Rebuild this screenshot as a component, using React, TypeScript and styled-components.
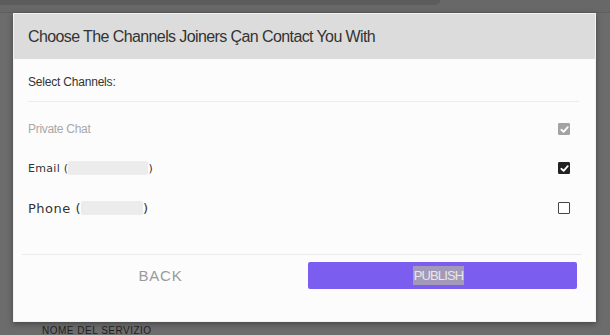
import styled, { createGlobalStyle } from 'styled-components';

const GlobalStyle = createGlobalStyle`
  html, body {
    margin: 0;
    padding: 0;
    background: #6c6c6c;
  }
`;

type Channel = {
    label: string;
    blurWidth?: number;
    state: 'locked' | 'on' | 'off';
    size: number;
    spacing: number;
};

const channels: Channel[] = [
    { label: 'Private Chat', state: 'locked', size: 12, spacing: -0.3 },
    { label: 'Email', blurWidth: 80, state: 'on', size: 11, spacing: 0.3 },
    { label: 'Phone', blurWidth: 62, state: 'off', size: 13, spacing: 0.5 },
];

function CheckMark({ color }: { color: string }) {
    return (
        <svg width="9" height="9" viewBox="0 0 10 10">
            <path d="M1.5 5.3 L4 7.6 L8.6 2.4" fill="none" stroke={color} strokeWidth="2" strokeLinecap="round" strokeLinejoin="round" />
        </svg>
    );
}

function App() {
    return (
        <>
            <GlobalStyle />
            <Page>
                <TopStrip>
                    <Pill />
                </TopStrip>
                <Modal>
                    <Header>Choose The Channels Joiners Çan Contact You With</Header>
                    <Body>
                        <SectionTitle>Select Channels:</SectionTitle>
                        <Divider />
                        {channels.map((c, i) => (
                            <Row key={c.label} first={i === 0}>
                                <Label
                                    muted={c.state === 'locked'}
                                    wide={c.state !== 'locked'}
                                    style={{ fontSize: c.size, letterSpacing: c.spacing }}
                                >
                                    {c.label}
                                    {c.blurWidth && (
                                        <>
                                            {' ('}
                                            <Blur style={{ width: c.blurWidth }} />
                                            {')'}
                                        </>
                                    )}
                                </Label>
                                <Box state={c.state}>
                                    {c.state !== 'off' && <CheckMark color="#fff" />}
                                </Box>
                            </Row>
                        ))}
                    </Body>
                    <Footer>
                        <BackButton>BACK</BackButton>
                        <PublishButton>
                            <PublishText>PUBLISH</PublishText>
                        </PublishButton>
                    </Footer>
                </Modal>
                <ServiceLabel>NOME DEL SERVIZIO</ServiceLabel>
            </Page>
        </>
    );
}

// Styled components
const Page = styled.div`
  width: 610px;
  height: 335px;
  overflow: hidden;
  background: #6c6c6c;
  font-family: "Liberation Sans", Arial, sans-serif;
`;

const TopStrip = styled.div`
  height: 12px;
  border-bottom: 1px solid #5f5f5f;
  background: #686868;
`;

const Pill = styled.div`
  width: 440px;
  height: 5px;
  background: #5c5c5c;
  border-radius: 0 0 6px 0;
`;

const Modal = styled.div`
  margin-left: 13px;
  width: 583px;
  height: 309px;
  background: #fdfcfd;
  border: 1px solid #f2f2f2;
  box-sizing: border-box;
  box-shadow: 0 2px 6px rgba(0, 0, 0, 0.35);
  display: flex;
  flex-direction: column;
`;

const Header = styled.div`
  height: 45px;
  background: #dcdcdc;
  display: flex;
  align-items: center;
  padding-left: 14px;
  font-size: 16px;
  color: #333;
  letter-spacing: -0.6px;
`;

const Body = styled.div`
  padding: 0 16px 0 14px;
  display: flex;
  flex-direction: column;
`;

const SectionTitle = styled.div`
  font-size: 12px;
  color: #333;
  padding: 16px 0 12px;
  letter-spacing: -0.2px;
`;

const Divider = styled.div`
  height: 1px;
  background: #ececec;
  margin-bottom: 8px;
`;

const Row = styled.div<{ first?: boolean }>`
  height: ${(p) => (p.first ? '38px' : '40px')};
  display: flex;
  align-items: center;
  justify-content: space-between;
  padding-right: 9px;
`;

const Label = styled.div<{ muted?: boolean; wide?: boolean }>`
  font-family: ${(p) => (p.wide ? '"DejaVu Sans", Verdana, sans-serif' : '"Liberation Sans", Arial, sans-serif')};
  color: ${(p) => (p.muted ? '#a8a8a8' : '#333')};
  display: flex;
  align-items: center;
  white-space: pre;
`;

const Blur = styled.span`
  display: inline-block;
  height: 14px;
  background: #ececec;
  border-radius: 2px;
`;

const Box = styled.div<{ state: 'locked' | 'on' | 'off' }>`
  width: 12px;
  height: 12px;
  box-sizing: border-box;
  border-radius: 1px;
  display: flex;
  align-items: center;
  justify-content: center;
  background: ${(p) => (p.state === 'locked' ? '#a3a3a3' : p.state === 'on' ? '#222' : '#fff')};
  border: 1px solid ${(p) => (p.state === 'locked' ? '#a3a3a3' : p.state === 'on' ? '#222' : '#444')};
`;

const Footer = styled.div`
  margin: auto 13px 0 8px;
  border-top: 1px solid #ececec;
  padding: 7px 5px 32px 0;
  display: flex;
  align-items: center;
  gap: 5px;
`;

const BackButton = styled.div`
  flex: 1;
  height: 27px;
  display: flex;
  align-items: center;
  justify-content: center;
  padding-right: 4px;
  font-size: 15px;
  color: #9a9a9a;
  letter-spacing: 0.8px;
`;

const PublishButton = styled.div`
  width: 269px;
  height: 27px;
  background: #7b5ef0;
  border-radius: 2px;
  display: flex;
  align-items: center;
  justify-content: center;
  padding-right: 8px;
  box-sizing: border-box;
`;

const PublishText = styled.span`
  font-size: 13px;
  color: #e8e8e8;
  background: #a29ab8;
  padding: 2px 1px;
  letter-spacing: -0.9px;
`;

const ServiceLabel = styled.div`
  margin: 3px 0 0 42px;
  font-size: 10px;
  color: #1e1e1e;
  letter-spacing: 0.5px;
`;

export default App;
